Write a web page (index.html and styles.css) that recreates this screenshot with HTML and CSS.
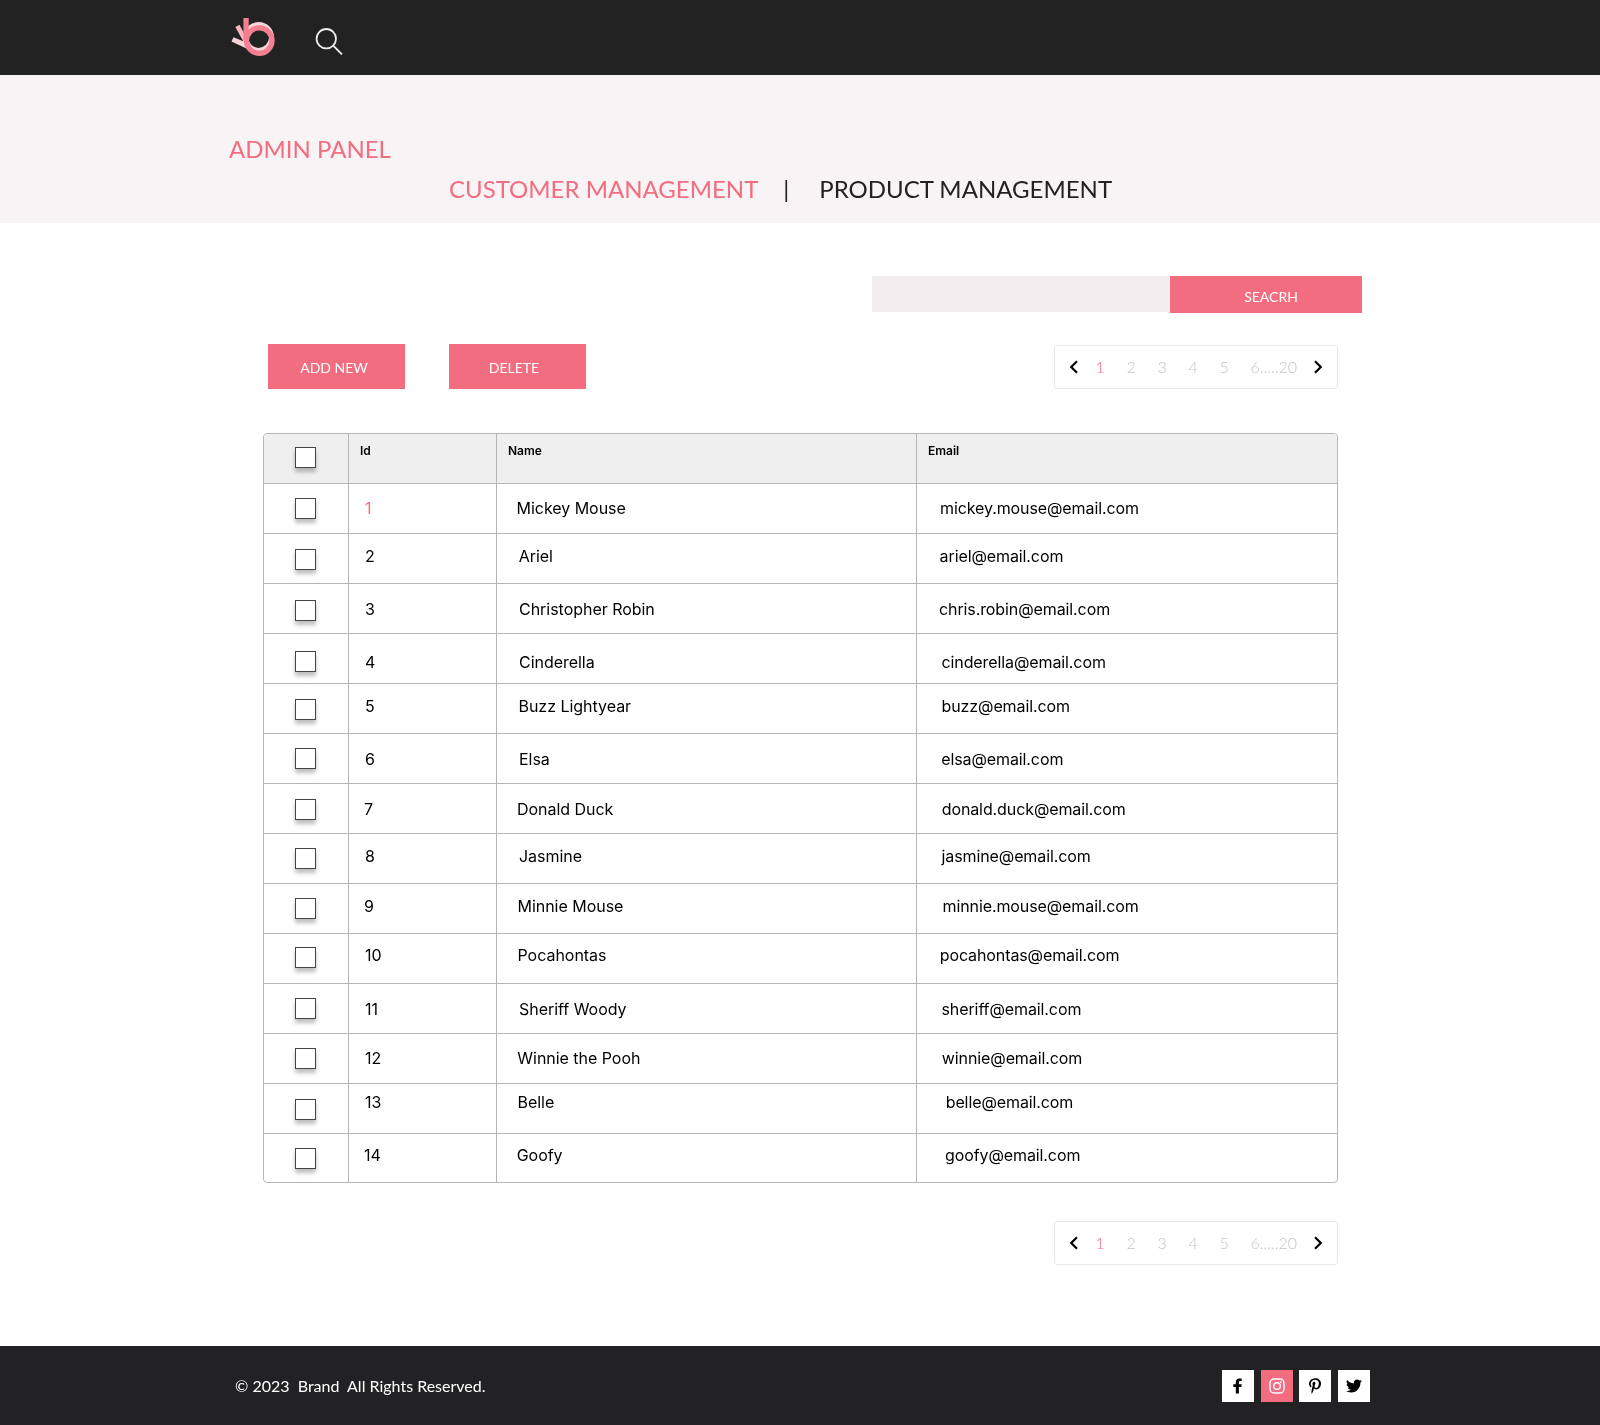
FILE: index.html
```html
<!DOCTYPE html>
<html lang="en">
<head>
<meta charset="utf-8">
<title>Admin Panel</title>
<link rel="stylesheet" href="styles.css">
</head>
<body>
<header class="topbar">
  <svg class="logo" width="44" height="40" viewBox="0 0 44 40">
    <circle cx="27.6" cy="19.5" r="12.9" fill="none" stroke="#f8d4da" stroke-width="5"/>
    <path d="M.5 23.500 2.500 19.200 16.500 25V31z" fill="#f8d4da"/>
    <path d="M4.300 8.900 8.500 6.800 15.500 20V29z" fill="#fbb5bf"/>
    <path d="M12.400 0h5.300v22h-5.300z" fill="#f47f90"/>
    <circle cx="28.300" cy="22.600" r="12.800" fill="none" stroke="#f47f90" stroke-width="5.200"/>
  </svg>
  <svg class="search-icon" width="28" height="28" viewBox="0 0 28 28" fill="none" stroke="#ebebeb" stroke-width="1.800">
    <circle cx="11.300" cy="11.700" r="9.700"/><path d="M18.200 18.700 27 27.500"/>
  </svg>
</header>

<section class="banner">
  <h1>ADMIN PANEL</h1>
  <nav class="tabs"><a class="active">CUSTOMER MANAGEMENT</a><span class="divider">|</span><a>PRODUCT MANAGEMENT</a></nav>
</section>

<main>
  <form class="search"><input type="text" aria-label="Search"><button type="button">SEACRH</button></form>
  <div class="toolbar">
    <button type="button" class="action">ADD NEW</button>
    <button type="button" class="action delete">DELETE</button>
    <nav class="pager">
      <svg width="10" height="14" viewBox="0 0 10 14"><path d="M8 1.200 2.200 7 8 12.800"/></svg>
      <a class="active">1</a><a>2</a><a>3</a><a>4</a><a>5</a><a class="range">6.....20</a>
      <svg width="10" height="14" viewBox="0 0 10 14"><path d="M2 1.200 7.800 7 2 12.800"/></svg>
    </nav>
  </div>

  <div class="table">
    <div class="row head"><div><i class="box"></i></div><div>Id</div><div>Name</div><div>Email</div></div>
    <div class="row"><div><i class="box"></i></div><div class="active">1</div><div>Mickey Mouse</div><div>mickey.mouse@email.com</div></div>
    <div class="row"><div><i class="box"></i></div><div>2</div><div>Ariel</div><div>ariel@email.com</div></div>
    <div class="row"><div><i class="box"></i></div><div>3</div><div>Christopher Robin</div><div>chris.robin@email.com</div></div>
    <div class="row"><div><i class="box"></i></div><div>4</div><div>Cinderella</div><div>cinderella@email.com</div></div>
    <div class="row"><div><i class="box"></i></div><div>5</div><div>Buzz Lightyear</div><div>buzz@email.com</div></div>
    <div class="row"><div><i class="box"></i></div><div>6</div><div>Elsa</div><div>elsa@email.com</div></div>
    <div class="row"><div><i class="box"></i></div><div>7</div><div>Donald Duck</div><div>donald.duck@email.com</div></div>
    <div class="row"><div><i class="box"></i></div><div>8</div><div>Jasmine</div><div>jasmine@email.com</div></div>
    <div class="row"><div><i class="box"></i></div><div>9</div><div>Minnie Mouse</div><div>minnie.mouse@email.com</div></div>
    <div class="row"><div><i class="box"></i></div><div>10</div><div>Pocahontas</div><div>pocahontas@email.com</div></div>
    <div class="row"><div><i class="box"></i></div><div>11</div><div>Sheriff Woody</div><div>sheriff@email.com</div></div>
    <div class="row"><div><i class="box"></i></div><div>12</div><div>Winnie the Pooh</div><div>winnie@email.com</div></div>
    <div class="row"><div><i class="box"></i></div><div>13</div><div>Belle</div><div>belle@email.com</div></div>
    <div class="row"><div><i class="box"></i></div><div>14</div><div>Goofy</div><div>goofy@email.com</div></div>
  </div>

  <nav class="pager">
    <svg width="10" height="14" viewBox="0 0 10 14"><path d="M8 1.200 2.200 7 8 12.800"/></svg>
    <a class="active">1</a><a>2</a><a>3</a><a>4</a><a>5</a><a class="range">6.....20</a>
    <svg width="10" height="14" viewBox="0 0 10 14"><path d="M2 1.200 7.800 7 2 12.800"/></svg>
  </nav>
</main>

<footer>
  <p>© 2023&nbsp; Brand&nbsp; All Rights Reserved.</p>
  <div class="social">
    <a><svg width="9" height="16" viewBox="0 0 9 16"><path d="M8.3 9 8.7 6.3H5.9V4.6c0-.8.4-1.5 1.5-1.5h1.3V.7S7.6.5 6.500.5C4.200.5 2.800 1.900 2.800 4.200v2.100H.3V9h2.500v6.500h3.100V9z"/></svg></a>
    <a class="active"><svg width="16" height="16" viewBox="0 0 16 16" fill="none" stroke="#fff" stroke-width="1.400"><rect x="1" y="1" width="14" height="14" rx="4"/><circle cx="8" cy="8" r="3.300"/><circle cx="11.900" cy="4.100" r=".9" fill="#fff" stroke="none"/></svg></a>
    <a><svg width="12" height="16" viewBox="0 0 384 512"><path d="M204 6.500C101.400 6.500 0 74.900 0 185.600 0 256 39.600 296 63.600 296c9.900 0 15.600-27.600 15.600-35.400 0-9.300-23.700-29.100-23.700-67.800 0-80.400 61.200-137.400 140.400-137.400 68.100 0 118.500 38.700 118.500 109.800 0 53.100-21.300 152.700-90.300 152.700-24.900 0-46.200-18-46.200-43.800 0-37.800 26.400-74.400 26.400-113.400 0-66.200-93.900-54.200-93.900 25.800 0 16.800 2.100 35.400 9.600 50.700-13.800 59.400-42 147.900-42 209.100 0 18.900 2.700 37.500 4.500 56.400 3.400 3.800 1.700 3.400 6.900 1.500 50.400-69 48.600-82.500 71.400-172.800 12.300 23.400 44.100 36 69.300 36 106.200 0 153.900-103.500 153.900-196.800C384 71.300 298.200 6.500 204 6.500z"/></svg></a>
    <a><svg width="16" height="16" viewBox="0 0 512 512"><path d="M459.400 151.700c.3 4.500.3 9.100.3 13.600 0 138.700-105.600 298.600-298.600 298.600-59.500 0-114.700-17.200-161.100-47.100 8.400 1 16.600 1.300 25.300 1.300 49.100 0 94.200-16.600 130.300-44.800-46.100-1-84.800-31.200-98.100-72.800 6.500 1 13 1.600 19.800 1.600 9.400 0 18.800-1.300 27.600-3.600-48.100-9.700-84.100-52-84.100-103v-1.300c14 7.800 30.200 12.700 47.400 13.300-28.300-18.800-46.800-51-46.800-87.400 0-19.500 5.200-37.400 14.300-53 51.700 63.700 129.300 105.300 216.400 109.800-1.600-7.800-2.600-15.900-2.600-24 0-57.800 46.800-104.900 104.900-104.900 30.200 0 57.500 12.700 76.700 33.100 23.700-4.500 46.500-13.300 66.600-25.300-7.800 24.400-24.400 44.800-46.100 57.800 21.100-2.300 41.600-8.100 60.400-16.200-14.300 20.800-32.200 39.300-52.600 54.300z"/></svg></a>
  </div>
</footer>
</body>
</html>
```
FILE: styles.css
```css
* { box-sizing: border-box; }
body { margin: 0; background: #fff; font-family: Lato, sans-serif; color: #000; }
h1, p { margin: 0; font-weight: 400; }
button { border: 0; padding: 0; background: #f26d80; color: #fff; font: 14px/18px Lato, sans-serif; }

.topbar { height: 75px; padding: 18px 0 0 231px; display: flex; background: #222; }
.search-icon { margin: 9px 0 0 40px; }

.banner { height: 148px; padding-top: 59px; background: #f8f3f4; font-size: 24px; line-height: 30px; }
.banner h1 { margin-left: 229px; font-size: 24px; line-height: 30px; color: #f26d80; }
.tabs { display: flex; margin: 10px 0 0 449px; color: #222; }
.tabs .active { color: #f26d80; }
.tabs .divider { width: 61px; padding-left: 25px; }
.banner h1, .tabs, main, footer p { will-change: opacity; }

main { padding: 53px 0 81px; display: flex; flex-direction: column; }
.search { display: flex; align-items: flex-start; margin-left: 872px; }
.search input { width: 298px; height: 36px; border: 0; background: #f2eeef; }
.search button { width: 192px; height: 37px; padding: 5px 0 0 10px; }

.toolbar { display: flex; align-items: flex-start; gap: 44px; margin: 31px 262px 0 268px; }
.action { width: 137px; height: 45px; padding: 2px 5px 0 0; }
.delete { padding-right: 7px; }
.toolbar .pager { margin: 1px 0 0 auto; }

.pager { display: flex; align-items: center; width: 284px; height: 44px; padding-left: 14px; border: 1px solid #e8e8e8; border-radius: 3px; font-weight: 300; font-size: 16px; line-height: 20px; color: #c4c4c4; }
.pager svg { fill: none; stroke: #000; stroke-width: 2.2; }
.pager a { width: 31px; padding-left: 1px; }
.pager a.active { color: #f26d80; margin-left: 15.5px; }
.pager .range { width: 63px; }
main > .pager { margin: 38px 0 0 1054px; }

.table { width: 1075px; margin: 44px 0 0 263px; border: 1px solid #b5b5b5; border-radius: 4px; overflow: hidden; font: 16px/20px Inter, sans-serif; }
.row { --text: 14px; --box: 14px; --id: 16px; --name: 22px; --mail: 23px; display: grid; grid-template-columns: 85px 148px 420px 1fr; height: 50px; border-bottom: 1px solid #b5b5b5; }
.row:last-child { height: 48px; border-bottom: 0; }
.row > div { border-right: 1px solid #b5b5b5; padding-top: var(--text); white-space: nowrap; }
.row > div:first-child { padding: var(--box) 0 0 31px; }
.row > div:nth-child(2) { padding-left: var(--id); }
.row > div:nth-child(3) { padding-left: var(--name); letter-spacing: -.03px; }
.row > div:last-child { padding-left: var(--mail); border-right: 0; letter-spacing: -.1px; }
.row .active { color: #f26d80; }
.row.head { --text: 7px; --box: 13px; --id: 11px; --name: 11px; --mail: 11px; background: #efefef; font-size: 12px; font-weight: 600; }
.row.head > div { letter-spacing: 0; }
.box { display: block; width: 21px; height: 21px; background: #fff; border: 1px solid #444; box-shadow: 0 4px 4px rgba(0, 0, 0, .25); }

.row:nth-child(2) { --name: 19.5px; }
.row:nth-child(3) { --text: 12px; --box: 15px; --name: 21.7px; --mail: 22.6px; }
.row:nth-child(4) { --text: 15px; --box: 16px; --mail: 22px; }
.row:nth-child(5) { --text: 18px; --box: 17px; --mail: 24.5px; }
.row:nth-child(6) { --text: 12px; --box: 15px; --name: 21.5px; --mail: 24.5px; }
.row:nth-child(7) { --text: 15px; --mail: 24.2px; }
.row:nth-child(8) { --text: 15px; --box: 15px; --id: 15px; --name: 20px; --mail: 24.7px; }
.row:nth-child(9) { --text: 12px; --mail: 24.5px; }
.row:nth-child(10) { --text: 12px; --id: 15px; --name: 20.5px; --mail: 25.5px; }
.row:nth-child(11) { --text: 11px; --box: 13px; --name: 20.5px; --mail: 22.7px; }
.row:nth-child(12) { --text: 15px; --mail: 24.5px; }
.row:nth-child(13) { --name: 20.3px; --mail: 24.8px; }
.row:nth-child(14) { --text: 8px; --box: 15px; --name: 20.5px; --mail: 28.7px; }
.row:nth-child(15) { --text: 11px; --id: 15px; --name: 19.7px; --mail: 28px; }

footer { display: flex; justify-content: space-between; align-items: flex-start; height: 79px; padding: 24px 230px 0 235px; background: #222224; color: #fff; }
footer p { padding-top: 6px; font-size: 16px; line-height: 20px; }
.social { display: flex; gap: 6.7px; }
.social a { display: grid; place-items: center; width: 32px; height: 32px; background: #fff; }
.social .active { background: #f26d80; }
```
